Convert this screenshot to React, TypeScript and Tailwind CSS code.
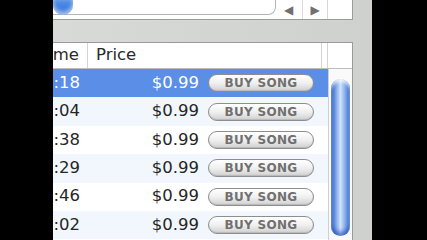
import React from 'react';

const times = [':18', ':04', ':38', ':29', ':46', ':02'];

const BuyButton = () => (
  <div className="w-[106px] h-[18px] rounded-full border border-[#8e8e8e] bg-gradient-to-b from-[#ffffff] via-[#f0f0f0] to-[#d0d0d0] flex items-center justify-center shadow-[inset_0_-1px_1px_rgba(0,0,0,0.12)]">
    <span className="text-[12px] font-bold text-[#707070] leading-none tracking-[0.3px]">BUY SONG</span>
  </div>
);

const App = () => {
  return (
    <div className="w-[427px] h-[240px] bg-black flex overflow-hidden font-['DejaVu_Sans',sans-serif]">
      <div className="w-[53px] shrink-0" />
      <div className="w-[319px] shrink-0 bg-gradient-to-r from-[#d8dad8] to-[#cfd1cf] flex flex-col">
        {/* top controls */}
        <div className="w-[300px] h-[20px] bg-white border-b border-r border-[#9c9c9c] flex items-start relative">
          <div className="w-[223px] h-[15px] border-b border-r border-[#b4b4b4] rounded-br-[8px] relative">
            <div className="absolute left-0 top-[-9px] w-[20px] h-[24px] rounded-full bg-gradient-to-b from-[#a9ccf6] via-[#4d8be3] to-[#2f6fd4] shadow-[inset_0_-3px_4px_rgba(255,255,255,0.6)]" />
          </div>
          <div className="w-[26px] h-[19px] flex items-center text-[#707070] text-[12px]">
            <span className="ml-[8px]">◀</span>
          </div>
          <div className="w-px h-[19px] bg-[#dcdcdc]" />
          <div className="w-[24px] h-[19px] flex items-center justify-center text-[#707070] text-[12px]">▶</div>
          <div className="w-px h-[19px] bg-[#d8d8d8]" />
        </div>
        <div className="h-[22px]" />
        {/* list */}
        <div className="w-[300px] flex-1 bg-white border-t border-r border-[#9a9a9a] flex flex-col">
          <div className="h-[26px] border-b border-[#bdbdbd] flex text-[16.5px] text-[#2a2a2a]">
            <div className="w-[35px] border-r border-[#d4d4d4] flex items-center justify-end pr-[8px] overflow-hidden">
              <span className="whitespace-nowrap">me</span>
            </div>
            <div className="w-[234px] border-r border-[#d4d4d4] flex items-center pl-[8px]">Price</div>
            <div className="w-[5px]" />
            <div className="flex-1 border-l border-[#d4d4d4]" />
          </div>
          <div className="flex flex-1">
            <div className="w-[275px] flex flex-col">
              {times.map((t, i) => (
                <div
                  key={i}
                  className={`h-[28.4px] shrink-0 flex items-center text-[16.5px] ${
                    i === 0 ? 'bg-[#5b8ee6] text-white' : i % 2 === 1 ? 'bg-[#f1f7fd] text-[#262626]' : 'bg-white text-[#262626]'
                  }`}
                >
                  <div className="w-[35px] text-right pr-[8px] whitespace-nowrap overflow-hidden">{t}</div>
                  <div className="w-[111px] text-right">$0.99</div>
                  <div className="ml-[9px]">
                    <BuyButton />
                  </div>
                </div>
              ))}
            </div>
            <div className="flex-1 border-l border-[#d0d0d0] bg-[#fafafa] pt-[10px] pl-[2px]">
              <div className="w-[19px] h-[157px] rounded-full bg-gradient-to-r from-[#2c62cc] via-[#cfe2fa] to-[#3b72d4] shadow-[inset_0_3px_3px_rgba(255,255,255,0.7),inset_0_-4px_4px_rgba(20,60,180,0.6)]" />
            </div>
          </div>
        </div>
      </div>
      <div className="flex-1" />
    </div>
  );
};

export default App;
